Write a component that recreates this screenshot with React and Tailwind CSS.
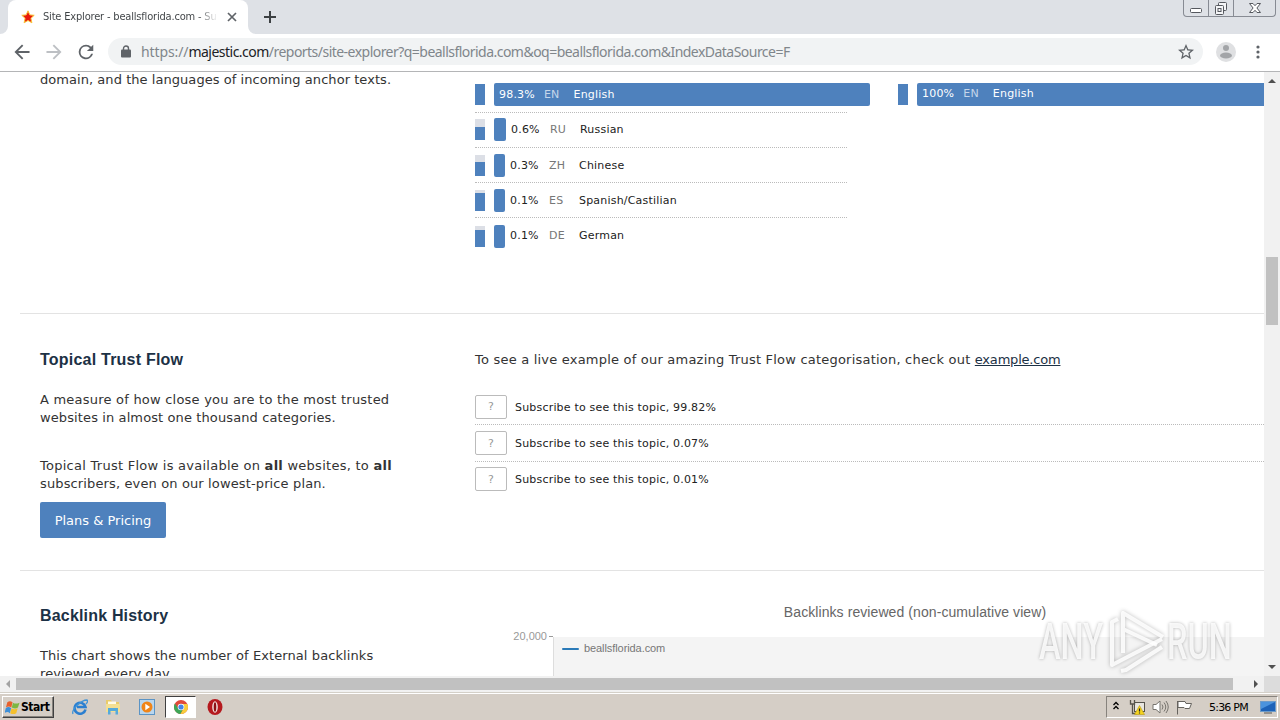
import React from 'react';

const languages = [
  { pct: '98.3%', code: 'EN', name: 'English', flow: 21, bar: 376, inside: true },
  { pct: '0.6%', code: 'RU', name: 'Russian', flow: 13, bar: 12 },
  { pct: '0.3%', code: 'ZH', name: 'Chinese', flow: 14, bar: 11, nudge: true },
  { pct: '0.1%', code: 'ES', name: 'Spanish/Castilian', flow: 18, bar: 11, nudge: true },
  { pct: '0.1%', code: 'DE', name: 'German', flow: 17, bar: 11, nudge: true },
];

const topics = [
  { pct: '99.82%', row: 'h-[36px] border-b' },
  { pct: '0.07%', row: 'h-[37px] border-b' },
  { pct: '0.01%', row: 'h-[34px]' },
];

function TabStrip() {
  return (
    <div className="flex h-[34px] shrink-0 items-start bg-[#dee1e6]">
      <svg className="mt-[26px]" width="8" height="8" viewBox="0 0 8 8"><path d="M8 0v8H0a8 8 0 0 0 8-8z" fill="#fff" /></svg>
      <div className="flex h-[34px] w-[240px] items-center rounded-t-lg bg-white pl-[13px]">
        <svg width="14" height="14" viewBox="0 0 14 14">
          <path d="M7 .8l1.800 4.100 4.400.4-3.300 3 1 4.500L7 10.500l-3.900 2.300 1-4.500-3.300-3 4.400-.4z" fill="#e8190c" stroke="#f9c53a" strokeWidth="1" />
        </svg>
        <div className="ml-2 w-[175px] whitespace-nowrap bg-gradient-to-r from-[#3c4043] from-88% to-transparent bg-clip-text pt-px font-['DejaVu_Sans_Condensed','DejaVu_Sans'] text-[11px] tracking-[-0.18px] text-transparent">
          Site Explorer - beallsflorida.com - Su
        </div>
        <svg className="ml-[9px]" width="10" height="10" viewBox="0 0 10 10" stroke="#5f6368" strokeWidth="1.7">
          <path d="M1 1l8 8M9 1l-8 8" />
        </svg>
      </div>
      <svg className="mt-[26px]" width="8" height="8" viewBox="0 0 8 8"><path d="M0 0v8h8a8 8 0 0 1-8-8z" fill="#fff" /></svg>
      <svg className="mt-[11px] ml-2" width="12" height="12" viewBox="0 0 12 12" stroke="#3c4043" strokeWidth="2">
        <path d="M6 0v12M0 6h12" />
      </svg>
      <div className="mr-1 ml-auto flex h-[17px] w-[93px] rounded-b-[4px] border border-t-0 border-[#878b93]">
        <div className="flex w-[25px] justify-center border-r border-[#878b93]">
          <svg width="14" height="16" viewBox="0 0 14 16" fill="#fff" stroke="#55585e">
            <rect x="1.5" y="8.5" width="11" height="4" rx="1" />
          </svg>
        </div>
        <div className="flex w-[25px] justify-center border-r border-[#878b93]">
          <svg width="14" height="16" viewBox="0 0 14 16" fill="#f4f5f7" stroke="#55585e">
            <rect x="4.5" y="2.5" width="8" height="8" rx="1" />
            <rect x="1.5" y="5.5" width="8" height="9" rx="1" />
            <rect x="4" y="8.5" width="3" height="3" />
          </svg>
        </div>
        <div className="flex flex-1 justify-center">
          <svg width="14" height="16" viewBox="0 0 14 16" fill="#fff" stroke="#55585e">
            <path d="M1.5 3.5h3.5l2 2.200 2-2.200h3.500l-3.600 4.500 3.600 4.500h-3.500l-2-2.200-2 2.200h-3.500l3.600-4.500z" />
          </svg>
        </div>
      </div>
    </div>
  );
}

function Toolbar() {
  return (
    <div className="flex h-[38px] shrink-0 items-center border-b border-[#b4b5b7] bg-white pb-[2px] pl-[14px]">
      <svg width="16" height="16" viewBox="3.500 3.500 17 17" fill="#5f6368">
        <path d="M20 11H7.830l5.590-5.590L12 4l-8 8 8 8 1.410-1.410L7.830 13H20v-2z" />
      </svg>
      <svg className="ml-4" width="16" height="16" viewBox="3.500 3.500 17 17" fill="#bdc0c4">
        <path d="M12 4l-1.410 1.410L16.170 11H4v2h12.170l-5.580 5.590L12 20l8-8z" />
      </svg>
      <svg className="ml-4" width="16" height="16" viewBox="3.200 3.200 17.600 17.600" fill="#5f6368">
        <path d="M17.650 6.350A7.960 7.960 0 0 0 12 4a8 8 0 1 0 7.730 10h-2.080A6 6 0 1 1 12 6c1.660 0 3.140.690 4.220 1.780L13 11h7V4l-2.350 2.350z" />
      </svg>
      <div className="ml-[14px] flex h-[27px] w-[1095px] items-center rounded-full bg-[#f1f3f4] pl-[13px]">
        <svg width="10" height="13" viewBox="0 0 10 13">
          <rect y="4.500" width="10" height="8" rx="1" fill="#5f6368" />
          <path d="M2.500 5V3.500a2.500 2.500 0 0 1 5 0V5" fill="none" stroke="#5f6368" strokeWidth="1.400" />
        </svg>
        <div className="ml-[10px] whitespace-nowrap font-['Noto_Sans'] text-[14px] tracking-[-0.53px] text-[#80868b]">
          <span className="tracking-[-0.1px]">https://</span><span className="tracking-[-0.52px] text-[#202124]">majestic.com</span>/reports/site-explorer?q=beallsflorida.com&amp;oq=beallsflorida.com&amp;IndexDataSource=F
        </div>
        <svg className="mr-[9px] ml-auto" width="16" height="16" viewBox="2 2 20 20" fill="#5f6368">
          <path d="M22 9.240l-7.190-.620L12 2 9.190 8.630 2 9.240l5.460 4.730L5.820 21 12 17.270 18.180 21l-1.630-7.030L22 9.240zM12 15.400l-3.760 2.270 1-4.280-3.320-2.880 4.380-.380L12 6.100l1.710 4.040 4.380.380-3.320 2.880 1 4.280L12 15.400z" />
        </svg>
      </div>
      <svg className="ml-[13px]" width="20" height="20" viewBox="0 0 20 20">
        <circle cx="10" cy="10" r="10" fill="#dfe0e2" />
        <circle cx="10" cy="6" r="3" fill="#a2a4a7" />
        <ellipse cx="10" cy="13.500" rx="6" ry="3" fill="#a2a4a7" />
      </svg>
      <svg className="ml-[20px]" width="4" height="14" viewBox="0 0 4 14" fill="#5f6368">
        <circle cx="2" cy="2" r="1.600" />
        <circle cx="2" cy="7" r="1.600" />
        <circle cx="2" cy="12" r="1.600" />
      </svg>
    </div>
  );
}

function LanguageRow({ row, last }) {
  return (
    <div className={`flex h-[35.1px] w-[372px] shrink-0 items-center whitespace-nowrap text-[11px] tracking-[0.2px] text-[#222] ${last ? '' : 'border-b border-dotted border-[#bbb]'} ${row.nudge ? 'pt-[2px]' : ''}`}>
      <div className="flex h-[21px] w-[10px] shrink-0 items-end bg-[#dcdfe6]">
        <div className="w-full bg-[#4e81bd]" style={{ height: row.flow }} />
      </div>
      {row.inside ? (
        <div className="ml-[9px] flex h-[23px] shrink-0 items-center rounded-[2px] bg-[#4e81bd] pl-[5px] text-white" style={{ width: row.bar }}>
          <span>{row.pct}</span>
          <span className="ml-[9px] text-[#c5d6ea]">{row.code}</span>
          <span className="ml-[14px]">{row.name}</span>
        </div>
      ) : (
        <>
          <div className="mr-[5px] ml-[9px] h-[23px] shrink-0 rounded-[2px] bg-[#4e81bd]" style={{ width: row.bar }} />
          <span className="w-[39px]">{row.pct}</span>
          <span className="w-[30px] text-[#777]">{row.code}</span>
          <span>{row.name}</span>
        </>
      )}
    </div>
  );
}

function Page() {
  return (
    <div className="h-[604px] flex-1 overflow-hidden bg-white pl-5 text-[13px] leading-[18px] text-[#333]">
      <div className="flex h-[242px] border-b border-[#e3e3e3] pl-5">
        <div className="-mt-px w-[435px] shrink-0 tracking-[0.05px]">domain, and the languages of incoming anchor texts.</div>
        <div className="flex w-[423px] shrink-0 flex-col pt-[5.500px]">
          {languages.map((row, i) => (
            <LanguageRow key={row.name} row={row} last={i === languages.length - 1} />
          ))}
        </div>
        <div className="pt-[4.900px]">
          <LanguageRow row={{ ...languages[0], pct: '100%', bar: 380 }} last />
        </div>
      </div>

      <div className="flex h-[257px] border-b border-[#e3e3e3] pl-5">
        <div className="w-[435px] shrink-0 pt-[37px]">
          <h3 className="font-['Liberation_Sans'] text-[16px] font-bold tracking-[0.22px] text-[#1c3145]">Topical Trust Flow</h3>
          <p className="mt-[22px]">
            <span className="tracking-[0.22px]">A measure of how close you are to the most trusted</span><br />
            <span className="tracking-[0.11px]">websites in almost one thousand categories.</span>
          </p>
          <p className="mt-[30px]">
            <span className="tracking-[0.26px]">Topical Trust Flow is available on <b>all</b> websites, to <b>all</b></span><br />
            <span className="tracking-[0.13px]">subscribers, even on our lowest-price plan.</span>
          </p>
          <button className="mt-[9px] flex h-9 w-[126px] items-center justify-center rounded-[2px] bg-[#4e81bd] pt-[2px] text-white">Plans &amp; Pricing</button>
        </div>
        <div className="flex-1 pt-[37px]">
          <p className="tracking-[0.21px]">To see a live example of our amazing Trust Flow categorisation, check out <a className="tracking-[-0.2px] text-[#1c3145] underline">example.com</a></p>
          <div className="mt-[20px] text-[11px] tracking-[0.19px] text-[#222]">
            {topics.map((topic) => (
              <div key={topic.pct} className={`flex items-center border-dotted border-[#bbb] ${topic.row}`}>
                <span className="flex h-6 w-8 items-center justify-center rounded-[2px] border border-[#bbb] pt-px text-[#999]">?</span>
                <span className="ml-2 pt-[2px]">Subscribe to see this topic, {topic.pct}</span>
              </div>
            ))}
          </div>
        </div>
      </div>

      <div className="flex h-[140px] pl-5">
        <div className="w-[435px] shrink-0 pt-[36px]">
          <h3 className="font-['Liberation_Sans'] text-[16px] font-bold tracking-[0.18px] text-[#1c3145]">Backlink History</h3>
          <p className="mt-[22px] tracking-[0.09px]">This chart shows the number of External backlinks<br />reviewed every day.</p>
        </div>
        <div className="flex-1 pt-[32px] font-['Liberation_Sans']">
          <div className="pl-[91px] text-center text-[14px] tracking-[0.08px] text-[#666]">Backlinks reviewed (non-cumulative view)</div>
          <div className="mt-[6px] flex">
            <span className="w-[72px] text-right text-[11px] text-[#999]">20,000</span>
            <span className="mt-[9px] ml-[2px] h-px w-[4px] bg-[#999]" />
            <div className="mt-[10px] flex h-20 flex-1 items-start border-l border-[#ddd] bg-[#f4f4f4] pt-[2px] pl-2 text-[11px] tracking-[-0.08px] text-[#777]">
              <span className="mt-[9px] mr-[5px] h-[2px] w-[17px] rounded-full bg-[#2a7ab8]" />
              beallsflorida.com
            </div>
          </div>
        </div>
      </div>
    </div>
  );
}

function VerticalScroll() {
  return (
    <div className="flex w-4 shrink-0 flex-col items-center bg-[#f1f1f1]">
      <svg className="mt-[6px]" width="8" height="5" viewBox="0 0 8 5"><path d="M0 5l4-4 4 4z" fill="#505050" /></svg>
      <div className="mt-[174px] h-[68px] w-3 bg-[#c1c1c1]" />
      <svg className="mt-auto mb-[6px]" width="8" height="5" viewBox="0 0 8 5"><path d="M0 0l4 4 4-4z" fill="#505050" /></svg>
    </div>
  );
}

function HorizontalScroll() {
  return (
    <div className="flex h-4 shrink-0 bg-[#f1f1f1]">
      <div className="flex w-[1264px] items-center">
        <svg className="ml-[5px]" width="5" height="8" viewBox="0 0 5 8"><path d="M5 0L1 4l4 4z" fill="#a3a3a3" /></svg>
        <div className="ml-[6px] h-3 w-[1217px] bg-[#c1c1c1]" />
        <svg className="mr-[5px] ml-auto" width="5" height="8" viewBox="0 0 5 8"><path d="M0 0l4 4-4 4z" fill="#505050" /></svg>
      </div>
      <div className="flex-1 bg-[#dcdcdc]" />
    </div>
  );
}

function Taskbar() {
  return (
    <div className="flex h-[28px] shrink-0 items-center border-t border-[#d4d0c8] bg-[#d5cec6] pb-[2px] shadow-[inset_0_1px_0_#fff]">
      <div className="mt-[3px] ml-[2px] flex h-[22px] w-[52px] items-center border border-t-white border-r-[#404040] border-b-[#404040] border-l-white pl-[2px] text-[12px] font-bold text-black shadow-[inset_-1px_-1px_0_#87837d]">
        <svg width="15" height="15" viewBox="0 0 16 16">
          <path d="M2.500 2.500c2-1.500 3.500-1.500 5.500 0L6.700 8c-2-1.500-3.500-1.500-5.700 0z" fill="#e8602c" />
          <path d="M8.500 2.800c2 1.400 4 1.400 7 0L13.800 8c-2 1.400-4 1.400-6.500 0z" fill="#7db742" />
          <path d="M.8 8.700c2-1.500 3.700-1.500 5.700 0L5.200 14c-2-1.500-3.500-1.500-5.700 0z" fill="#3d8fd8" />
          <path d="M7 8.800c2 1.400 4 1.400 6.500 0L12 14c-2 1.400-4 1.400-6.500 0z" fill="#f5c02c" />
        </svg>
        <span className="ml-px font-['DejaVu_Sans_Condensed','DejaVu_Sans'] tracking-[-0.45px]">Start</span>
      </div>
      <svg className="mt-[3px] ml-[18px]" width="16" height="16" viewBox="0 0 16 16">
        <path d="M13.500 10.500A5.500 5.500 0 1 1 13.500 8H5" fill="none" stroke="#2b7fd0" strokeWidth="2.600" />
        <path d="M1 15C-1 11 9 1 15 1c1 1 0 3-1 4" fill="none" stroke="#3f93d8" strokeWidth="1.300" />
      </svg>
      <svg className="mt-[3px] ml-[17px]" width="16" height="16" viewBox="0 0 16 16">
        <path d="M1 1h5l1 2h7v10H1z" fill="#e9cb6a" />
        <path d="M3 2.500h8v3H3z" fill="#fffbe8" />
        <path d="M1 5h14v8H1z" fill="#f3df92" />
        <path d="M3 15.500V9h10v6.500h-2.500V12h-5v3.500z" fill="#55aadb" />
      </svg>
      <svg className="mt-[3px] ml-[18px]" width="16" height="16" viewBox="0 0 16 16">
        <rect x=".5" y=".5" width="15" height="15" fill="#b9d6ee" stroke="#5b94c5" />
        <circle cx="8" cy="8" r="5.500" fill="#f08519" />
        <path d="M6.300 4.800L11 8l-4.700 3.200z" fill="#fff" />
      </svg>
      <div className="mt-[3px] ml-[10px] flex h-[22px] w-[31px] items-center justify-center border border-t-[#404040] border-r-white border-b-white border-l-[#404040] bg-white">
        <svg width="14" height="14" viewBox="0 0 14 14">
          <circle cx="7" cy="7" r="7" fill="#e04a3a" />
          <path d="M.9 3.500A7 7 0 0 0 6.500 14L9.500 8.500 4 8z" fill="#3da657" />
          <path d="M6.500 14A7 7 0 0 0 13.300 4H7l2.800 4z" fill="#f8cd3c" />
          <circle cx="7" cy="7" r="3.300" fill="#fff" />
          <circle cx="7" cy="7" r="2.600" fill="#4484e8" />
        </svg>
      </div>
      <svg className="mt-[3px] ml-[11px]" width="16" height="16" viewBox="0 0 16 16">
        <ellipse cx="8" cy="8" rx="7.500" ry="8" fill="#b5191e" />
        <ellipse cx="8" cy="8" rx="2.800" ry="5.800" fill="#f3e3e0" />
        <ellipse cx="8" cy="8" rx="1.300" ry="4.800" fill="#8c1114" />
      </svg>
      <div className="mt-[3px] mr-[2px] ml-auto flex h-[22px] w-[172px] items-center border border-t-[#87837d] border-r-white border-b-white border-l-[#87837d] pl-[6px]">
        <svg className="-mt-[3px]" width="6" height="9" viewBox="0 0 6 9" fill="none" stroke="#000" strokeWidth="1.300"><path d="M.5 4L3 1.500 5.500 4M.5 8L3 5.500 5.500 8" /></svg>
        <svg className="ml-[10px]" width="16" height="16" viewBox="0 0 16 16">
          <rect x="5.500" y="3.500" width="10" height="9" fill="#e8e6e0" stroke="#55524c" />
          <path d="M1.500 1v4h4V1M3.500 5v9.500H8" fill="none" stroke="#55524c" strokeWidth="1.300" />
          <path d="M10.500 6.500l5 9h-10z" fill="#f5d320" stroke="#b89a10" strokeWidth=".6" />
          <path d="M10.500 9.500v3m0 1v1" stroke="#222" strokeWidth="1.200" />
        </svg>
        <svg className="ml-[7px]" width="17" height="14" viewBox="0 0 17 14" fill="none" stroke="#77746e">
          <path d="M1 4.500h3L8 1v12L4 9.500H1z" fill="#fff" />
          <path d="M10 4.500q2 2.500 0 5M12 2.500q3.500 4.500 0 9M14 1q4.500 6 0 12" />
        </svg>
        <svg className="ml-[7px]" width="17" height="15" viewBox="0 0 17 15" fill="#fff" stroke="#66635e">
          <path d="M1.500 14.500V1M2 1.500h7l1 2h5.500l-2 5H9l-1-1H2z" />
        </svg>
        <span className="ml-4 whitespace-nowrap pt-[2px] text-[11px] tracking-[-0.78px] text-black">5:36 PM</span>
        <svg className="mr-px ml-auto" width="16" height="13" viewBox="0 0 16 13">
          <rect x=".5" y=".5" width="15" height="10" fill="#1d62b8" stroke="#6d9bc9" />
          <path d="M1 1h14L1 8z" fill="#4b93dd" />
          <path d="M4 12h8" stroke="#555" />
        </svg>
      </div>
    </div>
  );
}

function Watermark() {
  return (
    <div className="absolute top-[607px] left-[1039px] flex h-[70px] w-[200px] items-center font-[Roboto] text-[50px] leading-none font-medium text-white/85 [text-shadow:0_0_4px_rgba(0,0,0,0.3)]">
      <span className="w-[64px] origin-left scale-x-[0.65]">ANY</span>
      <svg className="mb-[2px] shrink-0 drop-shadow-[0_0_2px_rgba(0,0,0,0.3)]" width="64" height="68" viewBox="0 0 64 68" fill="none" stroke="#fff" strokeOpacity=".85" strokeWidth="4" strokeLinejoin="round">
        <path d="M60 30L20 6v40M20 22l34 16" />
        <path d="M15 12l-6 3v43l50-26M18 64l5-1 36-23" />
      </svg>
      <span className="origin-left scale-x-[0.65]">RUN</span>
    </div>
  );
}

export default function App() {
  return (
    <div className="relative flex h-[720px] w-[1280px] flex-col overflow-hidden bg-white font-['DejaVu_Sans']">
      <TabStrip />
      <Toolbar />
      <div className="flex h-[604px] shrink-0">
        <Page />
        <VerticalScroll />
      </div>
      <HorizontalScroll />
      <Taskbar />
      <Watermark />
    </div>
  );
}
